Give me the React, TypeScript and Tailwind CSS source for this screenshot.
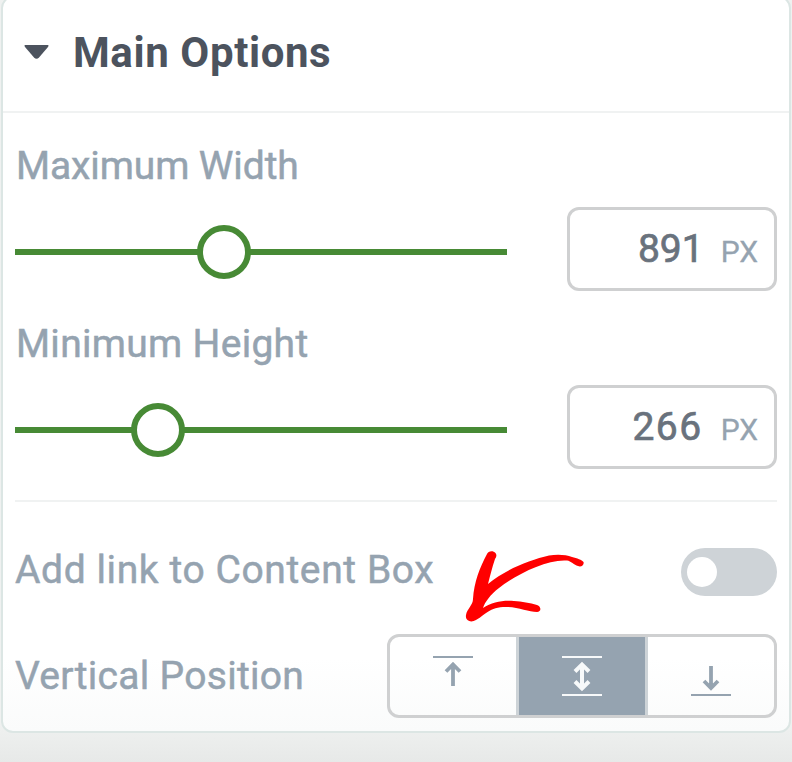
import { useState } from 'react'
import clsx from 'clsx'

type Position = 'top' | 'middle' | 'bottom'

interface SizeFieldProps {
  label: string
  labelClass: string
  value: number
  valueClass: string
  percent: number
}

function SizeField({ label, labelClass, value, valueClass, percent }: SizeFieldProps) {
  return (
    <div className="h-[178px] pt-[30px]">
      <div className={clsx('h-[46px] text-[39px] leading-[46px] [-webkit-text-stroke:0.5px]', labelClass)}>{label}</div>
      <div className="mt-[18px] flex h-[84px] items-center justify-between">
        {/* Slider */}
        <div className="relative mt-[6px] h-[6px] w-[492px] bg-[#478a35]">
          <div
            className="absolute top-1/2 size-[54px] -translate-x-1/2 -translate-y-1/2 rounded-full border-[6px] border-[#478a35] bg-white"
            style={{ left: `${percent}%` }}
          />
        </div>

        {/* Value */}
        <div className="flex h-[84px] w-[210px] items-baseline justify-end rounded-[12px] border-[3px] border-[#cfd0d1] bg-white pt-4 pr-4">
          <span className={clsx('text-[39px] leading-[46px] text-[#69727d] [-webkit-text-stroke:0.7px]', valueClass)}>
            {value}
          </span>
          <span className="text-[30px] leading-[46px] text-[#95a3b0] [-webkit-text-stroke:0.3px]">PX</span>
        </div>
      </div>
    </div>
  )
}

function PositionIcon({ position }: { position: Position }) {
  return (
    <svg width="40" height="42" viewBox="0 0 40 42" fill="none" stroke="currentColor">
      {position !== 'bottom' && <path d="M0 2H40" strokeWidth="2" />}
      {position !== 'top' && <path d="M0 40H40" strokeWidth="2" />}
      {position === 'top' && <path d="M20 31V9.500M13 16.500L20 9.500L27 16.500" strokeWidth="3.800" />}
      {position === 'middle' && (
        <path d="M20 10V33M13 16.500L20 9.500L27 16.500M13 26.500L20 33.500L27 26.500" strokeWidth="4" />
      )}
      {position === 'bottom' && <path d="M20 11V33M13 26L20 33L27 26" strokeWidth="3.800" />}
    </svg>
  )
}

const positions: Position[] = ['top', 'middle', 'bottom']

export default function App() {
  const [linked, setLinked] = useState(false)
  const [position, setPosition] = useState<Position>('middle')

  return (
    <div className="h-[762px] w-[792px] overflow-hidden bg-gradient-to-b from-[#eff1f0] from-[95%] to-[#e7e9e8] font-[Roboto,sans-serif] text-[#95a3b0]">
      <div className="relative -mt-[4px] ml-px h-[737px] w-[790px] rounded-[12px] border-2 border-[#dce6e4] bg-gradient-to-b from-white from-[90%] to-[#fafbfb]">
        {/* Header */}
        <div className="flex h-[115px] items-center border-b-2 border-[#f0f2f2] pb-1 pl-[21px] text-[#4c535e]">
          <svg className="-mt-[2px]" width="25" height="14" viewBox="0 0 25 14" fill="currentColor">
            <path d="M1 0H24Q25 .5 24 2L15 12.500Q12.500 15 10 12.500L1 2Q0 .5 1 0Z" />
          </svg>
          <h2 className="ml-6 text-[42px] leading-[48px] font-bold tracking-[0.6px]">Main Options</h2>
        </div>

        <div className="px-3">
          <SizeField
            label="Maximum Width"
            labelClass="pl-px tracking-[-0.1px]"
            value={891}
            valueClass="mr-[17px]"
            percent={42.5}
          />
          <SizeField
            label="Minimum Height"
            labelClass="pl-px tracking-[0.3px]"
            value={266}
            valueClass="mr-[18px] tracking-[1.5px]"
            percent={29}
          />
          <div className="mt-[31px] h-[2px] bg-[#f0f2f2]" />

          {/* Link toggle */}
          <div className="mt-[46px] flex h-[48px] items-center justify-between">
            <span className="-mt-[4px] text-[39px] leading-[46px] tracking-[0.6px] [-webkit-text-stroke:0.5px]">
              Add link to Content Box
            </span>
            <button
              className="flex h-[48px] w-[96px] items-center rounded-full bg-[#ced3d7] px-[6px]"
              onClick={() => setLinked(!linked)}
            >
              <span className={clsx('size-[30px] rounded-full bg-white', linked && 'ml-auto')} />
            </button>
          </div>

          {/* Vertical position */}
          <div className="mt-[38px] flex h-[84px] items-center justify-between">
            <span className="text-[39px] leading-[46px] tracking-[0.3px] [-webkit-text-stroke:0.5px]">
              Vertical Position
            </span>
            <div className="flex h-[84px] w-[390px] overflow-hidden rounded-[12px] border-[3px] border-[#cfd0d1]">
              {positions.map((item) => (
                <button
                  key={item}
                  className={clsx(
                    'flex flex-1 items-center justify-center',
                    item === position && 'border-x-[3px] border-[#cdd3d7] bg-[#95a3b0] text-[#f7f9fa]'
                  )}
                  onClick={() => setPosition(item)}
                >
                  <PositionIcon position={item} />
                </button>
              ))}
            </div>
          </div>
        </div>

        {/* Hand-drawn pointer */}
        <svg className="absolute top-[542px] left-[457px]" width="130" height="90" viewBox="0 0 130 90" fill="#ff0000">
          <path d="M27 14C28 11 33 10 35.500 13C37 15 36.500 17 35 19C32 28 30 36 28 44C46 29 70 20 89 15.500C97 14 106 14.500 112 17C117 18 122 20 123.500 22C124.500 25 121 27.500 118 26C114 25 111 21 107 20.500C87 19 57 34 39 48C30 55 25 62 23 68C32 62 43 60 54 61C62 61.500 70 63 77 65C82 67 81 72 77 72C68 72 56 66 43 67C28 68 23 77 16 80C11 83 5 81 6 75C7 69 13 65 13 59C14 42 20 27 27 14Z" />
        </svg>
      </div>
    </div>
  )
}
